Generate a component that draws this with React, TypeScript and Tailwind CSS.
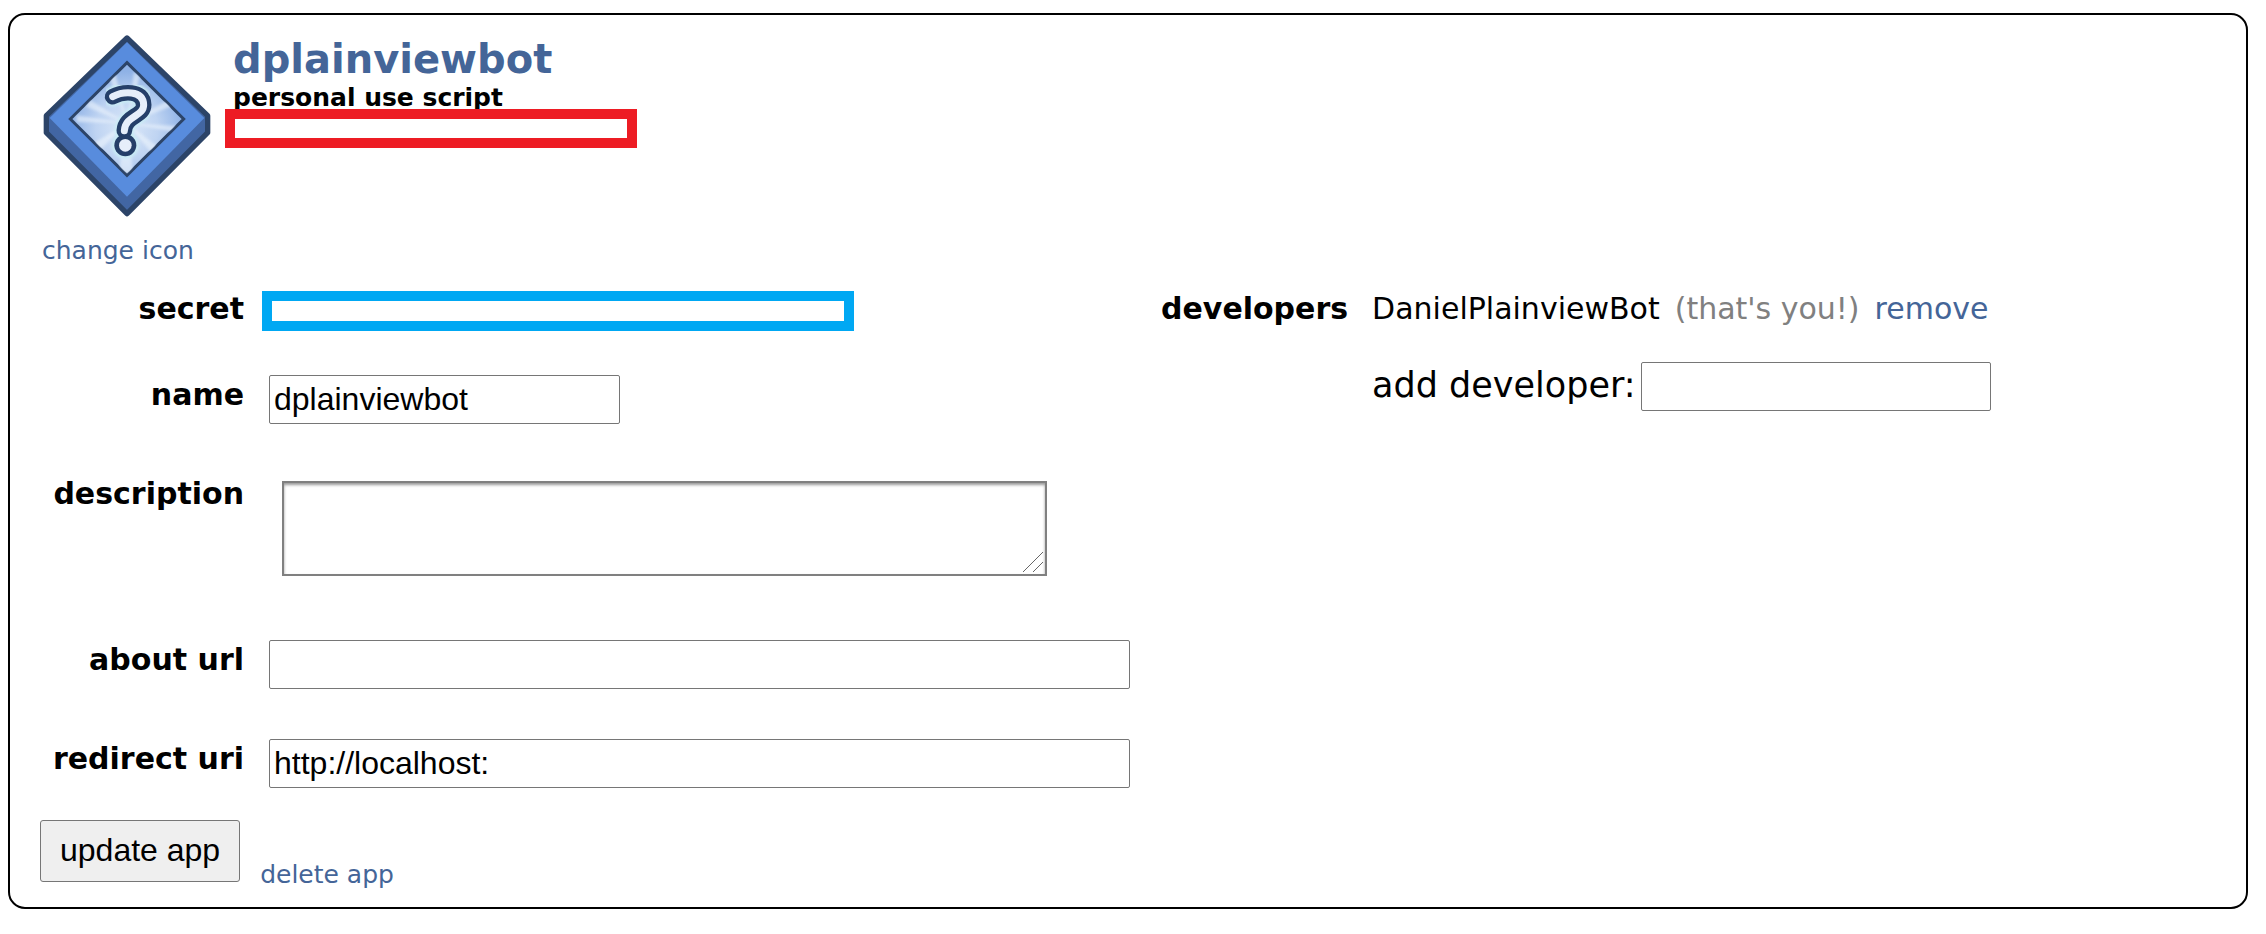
import type { ReactNode } from "react";

const LINK = "text-[#446598] hover:underline";
const INPUT =
  "h-[49px] rounded-[2px] border border-[#767676] bg-white px-1 font-['Liberation_Sans',sans-serif] text-[32px] text-black";
const LABEL = "text-[30px] leading-9 font-bold";
const HOOK = "M338 290C366 275 430 267 431 315C431 350 376 346 373 392";

function AppIcon() {
  return (
    <svg
      className="ml-0.5 h-[182px] w-[170px] shrink-0"
      viewBox="126 105 510 546"
      role="img"
      aria-label="app icon"
    >
      <defs>
        <radialGradient id="glow" gradientUnits="userSpaceOnUse" cx="381" cy="385" r="170">
          <stop offset="0" stopColor="#dbe8f9" />
          <stop offset="0.55" stopColor="#bfd4f2" />
          <stop offset="1" stopColor="#8fb2e6" />
        </radialGradient>
        <clipPath id="face">
          <path d="M381 192L547 357L381 522L215 357Z" />
        </clipPath>
        <filter id="soft" x="-20%" y="-20%" width="140%" height="140%">
          <feGaussianBlur stdDeviation="4" />
        </filter>
      </defs>
      <path
        d="M381 114L623 347V398L381 641L139 398V347Z"
        fill="#4266a3"
        stroke="#2c4468"
        strokeWidth="16"
        strokeLinejoin="round"
      />
      <path d="M381 127L613 354L381 590L149 354Z" fill="#588cdd" />
      <path
        d="M381 188L551 357L381 526L211 357Z"
        fill="url(#glow)"
        stroke="#2c4468"
        strokeWidth="9"
      />
      <g clipPath="url(#face)">
        <g fill="#eef5fd" opacity="0.6" filter="url(#soft)">
          <path d="M381 370L325 225L345 215Z" />
          <path d="M381 370L402 215L420 228Z" />
          <path d="M381 370L505 300L518 318Z" />
          <path d="M381 370L270 300L258 320Z" />
          <path d="M381 370L230 346L230 366Z" />
          <path d="M381 370L535 378L520 395Z" />
          <path d="M381 370L280 430L300 450Z" />
          <path d="M381 370L480 445L460 465Z" />
          <path d="M381 370L355 520L400 520Z" />
        </g>
      </g>
      <g fill="none" strokeLinejoin="round" strokeLinecap="round">
        <path d={HOOK} stroke="#c9ecf5" strokeWidth="58" filter="url(#soft)" />
        <circle cx="376" cy="436" r="40" fill="#c9ecf5" filter="url(#soft)" />
        <path d={HOOK} stroke="#253f69" strokeWidth="47" />
        <circle cx="376" cy="436" r="33" fill="#253f69" />
        <path d={HOOK} stroke="#e6eefa" strokeWidth="21" />
        <circle cx="376" cy="436" r="19" fill="#e6eefa" />
      </g>
    </svg>
  );
}

function Row({
  label,
  htmlFor,
  className,
  labelClassName = "pt-0.5",
  children,
}: {
  label: string;
  htmlFor: string;
  className: string;
  labelClassName?: string;
  children: ReactNode;
}) {
  return (
    <div className={`flex items-start gap-[25px] ${className}`}>
      <label htmlFor={htmlFor} className={`w-[204px] shrink-0 text-right ${LABEL} ${labelClassName}`}>
        {label}
      </label>
      {children}
    </div>
  );
}

export default function App() {
  return (
    <main className="bg-white pt-[13px] pr-[18px] pl-2 font-['DejaVu_Sans',Verdana,sans-serif] text-black">
      <section className="rounded-[17px] border-2 border-black px-[30px] pt-5 pb-4">
        <header className="flex items-start gap-[21px]">
          <AppIcon />
          <div className="flex flex-col items-start">
            <h1 className="text-[40px] leading-[48px] font-bold">
              <a href="#app" className={LINK}>
                dplainviewbot
              </a>
            </h1>
            <p className="text-[25px] leading-[30px] font-bold">personal use script</p>
            <div className="relative -mt-1 -ml-2 h-[39px] w-[412px] border-10 border-[#ed1c24] bg-white" />
          </div>
        </header>
        <a href="#icon" className={`mt-[18px] ml-0.5 inline-block text-[25px] leading-8 ${LINK}`}>
          change icon
        </a>

        <form onSubmit={(e) => e.preventDefault()}>
          <div className="mt-6 flex items-start gap-[31px]">
            <div className="w-full max-w-[1090px]">
              <Row label="secret" htmlFor="secret" className="" labelClassName="">
                <output
                  id="secret"
                  className="-ml-[7px] h-10 w-[592px] border-10 border-[#00a8f3] bg-white"
                />
              </Row>
              <Row label="name" htmlFor="name" className="mt-11">
                <input id="name" defaultValue="dplainviewbot" className={`w-[351px] ${INPUT}`} />
              </Row>
              <Row label="description" htmlFor="description" className="mt-[52px]" labelClassName="">
                <div className="relative mt-[5px] ml-[13px] h-[95px] w-full max-w-[765px]">
                  <textarea
                    id="description"
                    className="block h-full w-full resize-none border-2 border-[#808080] bg-white p-1 font-['Liberation_Sans',sans-serif] text-[32px] shadow-[inset_0_2px_3px_rgba(0,0,0,0.4)]"
                  />
                  <svg
                    className="pointer-events-none absolute right-1 bottom-1 h-5 w-5"
                    viewBox="0 0 20 20"
                    stroke="#666"
                    strokeWidth="1"
                    aria-hidden="true"
                  >
                    <path d="M0 20L20 0M10 20L20 10" />
                  </svg>
                </div>
              </Row>
              <Row label="about url" htmlFor="about" className="mt-16">
                <input id="about" className={`w-full max-w-[861px] ${INPUT}`} />
              </Row>
              <Row label="redirect uri" htmlFor="redirect" className="mt-[50px]">
                <input
                  id="redirect"
                  defaultValue="http://localhost:"
                  className={`w-full max-w-[861px] ${INPUT}`}
                />
              </Row>
            </div>

            <div className="flex shrink-0 items-start gap-6">
              <h2 className={LABEL}>developers</h2>
              <div>
                <p className="flex gap-[15px] text-[30px] leading-9">
                  <span>DanielPlainviewBot</span>
                  <span className="text-[#808080]">(that's you!)</span>
                  <a href="#remove" className={LINK}>
                    remove
                  </a>
                </p>
                <div className="mt-[35px] flex items-start gap-[5px]">
                  <label htmlFor="developer" className="text-[35px] leading-[46px]">
                    add developer:
                  </label>
                  <input id="developer" className={`w-[350px] ${INPUT}`} />
                </div>
              </div>
            </div>
          </div>

          <div className="mt-8 flex items-start gap-5">
            <button
              type="submit"
              className="h-[62px] rounded-[3px] border border-[#767676] bg-[#efefef] px-[19px] pb-0.5 font-['Liberation_Sans',sans-serif] text-[32px]"
            >
              update app
            </button>
            <a href="#delete" className={`mt-[39px] text-[25px] leading-8 ${LINK}`}>
              delete app
            </a>
          </div>
        </form>
      </section>
    </main>
  );
}
